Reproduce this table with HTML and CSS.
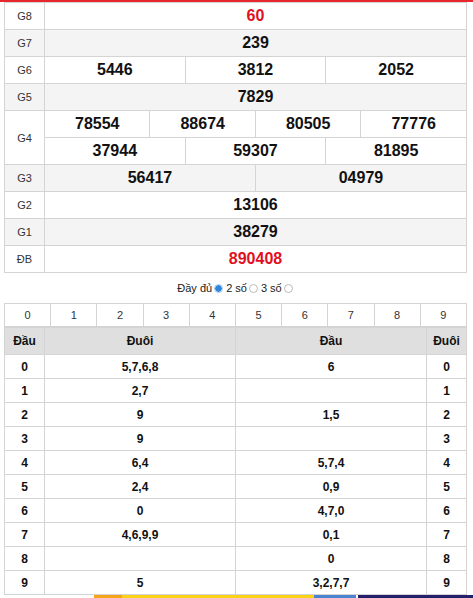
FILE: index.html
```html
<!DOCTYPE html>
<html lang="vi">
<head>
<meta charset="utf-8">
<title>Kết quả xổ số</title>
<link rel="stylesheet" href="styles.css">
</head>
<body>
<div class="topbar"></div>
<div class="wrap">
  <table class="kq">
    <colgroup><col class="c-lbl"><col span="12"></colgroup>
    <tr><td class="lbl">G8</td><td colspan="12" class="num red">60</td></tr>
    <tr class="alt"><td class="lbl">G7</td><td colspan="12" class="num">239</td></tr>
    <tr><td class="lbl">G6</td><td colspan="4" class="num">5446</td><td colspan="4" class="num">3812</td><td colspan="4" class="num">2052</td></tr>
    <tr class="alt"><td class="lbl">G5</td><td colspan="12" class="num">7829</td></tr>
    <tr><td class="lbl" rowspan="2">G4</td><td colspan="3" class="num">78554</td><td colspan="3" class="num">88674</td><td colspan="3" class="num">80505</td><td colspan="3" class="num">77776</td></tr>
    <tr><td colspan="4" class="num">37944</td><td colspan="4" class="num">59307</td><td colspan="4" class="num">81895</td></tr>
    <tr class="alt"><td class="lbl">G3</td><td colspan="6" class="num">56417</td><td colspan="6" class="num">04979</td></tr>
    <tr><td class="lbl">G2</td><td colspan="12" class="num">13106</td></tr>
    <tr class="alt"><td class="lbl">G1</td><td colspan="12" class="num">38279</td></tr>
    <tr><td class="lbl">ĐB</td><td colspan="12" class="num red">890408</td></tr>
  </table>

  <div class="opts">
    <span>Đầy đủ</span><span class="radio on"></span>
    <span>2 số</span><span class="radio"></span>
    <span>3 số</span><span class="radio"></span>
  </div>

  <table class="digits">
    <tr><td>0</td><td>1</td><td>2</td><td>3</td><td>4</td><td>5</td><td>6</td><td>7</td><td>8</td><td>9</td></tr>
  </table>

  <table class="loto">
    <colgroup><col class="c-s"><col><col><col class="c-s"></colgroup>
    <tr class="head"><th>Đầu</th><th>Đuôi</th><th>Đầu</th><th>Đuôi</th></tr>
    <tr><td>0</td><td>5,7,6,8</td><td>6</td><td>0</td></tr>
    <tr><td>1</td><td>2,7</td><td></td><td>1</td></tr>
    <tr><td>2</td><td>9</td><td>1,5</td><td>2</td></tr>
    <tr><td>3</td><td>9</td><td></td><td>3</td></tr>
    <tr><td>4</td><td>6,4</td><td>5,7,4</td><td>4</td></tr>
    <tr><td>5</td><td>2,4</td><td>0,9</td><td>5</td></tr>
    <tr><td>6</td><td>0</td><td>4,7,0</td><td>6</td></tr>
    <tr><td>7</td><td>4,6,9,9</td><td>0,1</td><td>7</td></tr>
    <tr><td>8</td><td></td><td>0</td><td>8</td></tr>
    <tr><td>9</td><td>5</td><td>3,2,7,7</td><td>9</td></tr>
  </table>

  <div class="ad">
    <span class="ad-a"></span><span class="ad-b"></span><span class="ad-c"></span><span class="ad-d"></span>
  </div>
</div>
</body>
</html>
```

FILE: styles.css
```css
html, body {
  margin: 0;
  padding: 0;
  background: #fff;
  font-family: "Liberation Sans", Arial, sans-serif;
  color: #222;
}

.topbar {
  height: 2px;
  background: #e8262d;
}

.wrap {
  padding: 0 6px 0 4px;
}

table {
  border-collapse: collapse;
  table-layout: fixed;
  width: 463px;
}

td, th {
  border: 1px solid #d4d4d4;
  padding: 0;
  text-align: center;
}

/* result table */
.kq .c-lbl { width: 40px; }
.kq tr { height: 27px; }
.kq tr.alt { background: #f4f4f4; }
.kq .lbl {
  font-size: 11px;
  color: #333;
}
.kq .num {
  font-size: 16px;
  font-weight: bold;
  color: #111;
}
.kq .num.red { color: #e0101e; }

/* options row */
.opts {
  height: 30px;
  display: flex;
  align-items: center;
  justify-content: center;
  gap: 2px;
  font-size: 11px;
  color: #222;
}
.radio {
  width: 7px;
  height: 7px;
  border: 1px solid #bbb;
  border-radius: 50%;
  box-sizing: content-box;
  background: #fff;
  margin-right: 1px;
}
.radio.on {
  border-color: #9cc6ee;
  background: radial-gradient(circle, #2f86d8 0 3px, #e6f1fb 3.5px);
}

/* digits row */
.digits tr { height: 23px; }
.digits td {
  font-size: 11px;
  color: #333;
}

/* loto table */
.loto .c-s { width: 40px; }
.loto tr { height: 24px; }
.loto tr.head { height: 27px; background: #dfdfdf; }
.loto th, .loto td {
  font-size: 12px;
  font-weight: bold;
  color: #111;
}

/* bottom ad strip */
.ad {
  display: flex;
  height: 4px;
  margin: 0 -6px 0 90px;
}
.ad-a { width: 28px; background: #f6a41a; }
.ad-b { width: 192px; background: #fbd215; }
.ad-c { width: 42px; background: #4a84d0; margin-right: 2px; }
.ad-d { flex: 1; background: #231f6a; }
```
